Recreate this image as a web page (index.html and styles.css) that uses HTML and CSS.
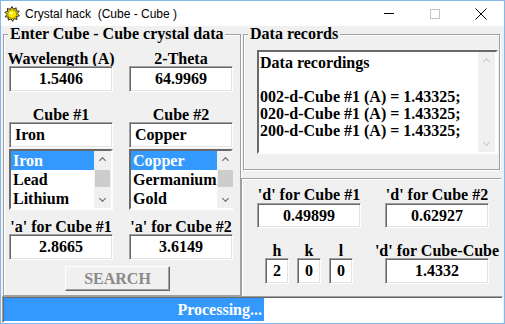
FILE: index.html
```html
<!DOCTYPE html>
<html lang="en">
<head>
<meta charset="UTF-8">
<title>Crystal hack (Cube - Cube )</title>
<link rel="stylesheet" href="styles.css">
</head>
<body>

<div class="window">
    <div class="titlebar">
        <svg class="app-icon" width="16" height="16" viewBox="0 0 16 16">
            <polygon points="8,0.5 9.4,3.2 12.2,1.8 12.1,4.8 15.2,5.2 13.3,7.6 15.5,9.8 12.5,10.6 13,13.6 10.1,12.6 8.6,15.4 7,12.8 4.2,14.2 4.3,11.2 1.2,10.8 3,8.4 0.8,6.2 3.8,5.4 3.3,2.4 6.2,3.4" fill="#ffe100" stroke="#2b2b2b" stroke-width="1"/>
            <circle cx="8.2" cy="8.1" r="4.4" fill="#f6e600" stroke="#8c7c00" stroke-width="0.8"/>
            <circle cx="7.2" cy="7" r="1.6" fill="#fffba0"/>
        </svg>
        <span class="title">Crystal hack  (Cube - Cube )</span>
        <div class="controls">
            <div class="ctl"><span class="min-line"></span></div>
            <div class="ctl"><span class="max-box"></span></div>
            <div class="ctl">
                <svg width="12" height="12" viewBox="0 0 12 12">
                    <path d="M0.5 0.5 L11.5 11.5 M11.5 0.5 L0.5 11.5" stroke="#000" stroke-width="1"/>
                </svg>
            </div>
        </div>
    </div>

    <div class="main">
        <fieldset class="group input-group">
            <legend>Enter Cube - Cube crystal data</legend>
            <div class="grid">
                <div class="col">
                    <span class="lbl">Wavelength (A)</span>
                    <input class="box" value="1.5406" readonly>
                    <span class="lbl gap-cube">Cube #1</span>
                    <input class="box combo" value="Iron" readonly>
                    <div class="listbox">
                        <div class="items">
                            <div class="item selected">Iron</div>
                            <div class="item">Lead</div>
                            <div class="item">Lithium</div>
                        </div>
                        <div class="vscroll">
                            <span class="arrow up"></span>
                            <span class="thumb"></span>
                            <span class="arrow down"></span>
                        </div>
                    </div>
                    <span class="lbl gap-a">'a' for Cube #1</span>
                    <input class="box" value="2.8665" readonly>
                </div>
                <div class="col">
                    <span class="lbl">2-Theta</span>
                    <input class="box" value="64.9969" readonly>
                    <span class="lbl gap-cube">Cube #2</span>
                    <input class="box combo" value="Copper" readonly>
                    <div class="listbox">
                        <div class="items">
                            <div class="item selected">Copper</div>
                            <div class="item">Germanium</div>
                            <div class="item">Gold</div>
                        </div>
                        <div class="vscroll">
                            <span class="arrow up"></span>
                            <span class="thumb"></span>
                            <span class="arrow down"></span>
                        </div>
                    </div>
                    <span class="lbl gap-a">'a' for Cube #2</span>
                    <input class="box" value="3.6149" readonly>
                </div>
            </div>
            <button class="search-btn" disabled>SEARCH</button>
        </fieldset>

        <div class="right">
            <fieldset class="group records">
                <legend>Data records</legend>
                <div class="memo">
                    <div class="memo-text">
                        <div>Data recordings</div>
                        <div>&nbsp;</div>
                        <div>002-d-Cube #1 (A) = 1.43325;</div>
                        <div>020-d-Cube #1 (A) = 1.43325;</div>
                        <div>200-d-Cube #1 (A) = 1.43325;</div>
                    </div>
                    <div class="vscroll disabled">
                        <span class="arrow up"></span>
                        <span class="arrow down"></span>
                    </div>
                </div>
            </fieldset>

            <div class="panel">
                <div class="prow">
                    <div class="pcol">
                        <span class="lbl">'d' for Cube #1</span>
                        <input class="box short" value="0.49899" readonly>
                    </div>
                    <div class="pcol">
                        <span class="lbl">'d' for Cube #2</span>
                        <input class="box short" value="0.62927" readonly>
                    </div>
                </div>
                <div class="prow second">
                    <div class="hkl">
                        <div class="miller"><span class="lbl">h</span><input class="box tiny" value="2" readonly></div>
                        <div class="miller"><span class="lbl">k</span><input class="box tiny" value="0" readonly></div>
                        <div class="miller"><span class="lbl">l</span><input class="box tiny" value="0" readonly></div>
                    </div>
                    <div class="pcol">
                        <span class="lbl">'d' for Cube-Cube</span>
                        <input class="box" value="1.4332" readonly>
                    </div>
                </div>
            </div>
        </div>
    </div>

    <div class="progress">
        <div class="progress-fill">Processing...</div>
    </div>
</div>

</body>
</html>
```

FILE: styles.css
```css
* {
    box-sizing: border-box;
}
body {
    margin: 0;
    background: #fff;
    font-family: "Liberation Serif", "Times New Roman", serif;
    color: #000;
}
.window {
    width: 505px;
    height: 324px;
    border: 1px solid #84b9ec;
    background: #f0f0f0;
    display: flex;
    flex-direction: column;
    overflow: hidden;
}
.titlebar {
    height: 25px;
    flex: none;
    background: #fff;
    display: flex;
    align-items: center;
    padding-left: 3px;
    font-family: "Liberation Sans", Arial, sans-serif;
    font-size: 12px;
}
.app-icon {
    flex: none;
}
.title {
    margin-left: 5px;
    white-space: pre;
}
.controls {
    margin-left: auto;
    display: flex;
    height: 100%;
}
.ctl {
    width: 46px;
    height: 100%;
    display: flex;
    align-items: center;
    justify-content: center;
}
.min-line {
    width: 10px;
    height: 1px;
    background: #000;
}
.max-box {
    width: 10px;
    height: 10px;
    border: 1px solid #c4c4c4;
}

/* main area */
.main {
    height: 270px;
    flex: none;
    display: flex;
    padding-left: 2px;
}
.group {
    margin: 0;
    padding: 0;
    min-width: 0;
    border: 1px solid #a0a0a0;
    box-shadow: inset 1px 1px 0 #fff, 1px 1px 0 #fff;
}
.group legend {
    font-size: 16px;
    font-weight: bold;
    line-height: 16px;
    padding: 0 2px;
    margin-left: 4px;
    background: #f0f0f0;
    position: relative;
    white-space: nowrap;
}
.input-group {
    width: 238px;
    height: 270px;
}
.grid {
    display: grid;
    grid-template-columns: 104px 104px;
    column-gap: 16px;
    padding: 10px 0 0 5px;
}
.col {
    display: flex;
    flex-direction: column;
    align-items: center;
}
.lbl {
    display: block;
    font-size: 16px;
    font-weight: bold;
    line-height: 14px;
    height: 14px;
    text-align: center;
    white-space: nowrap;
}
.gap-cube {
    margin-top: 16px;
}
.gap-a {
    margin-top: 10px;
}
.box {
    width: 104px;
    height: 26px;
    flex: none;
    margin: 0;
    padding: 0;
    border: 1px solid;
    border-color: #a0a0a0 #fff #fff #a0a0a0;
    box-shadow: inset 1px 1px 0 #696969, inset -1px -1px 0 #e3e3e3;
    background: #fff;
    font-family: "Liberation Serif", "Times New Roman", serif;
    font-size: 16px;
    font-weight: bold;
    color: #000;
    text-align: center;
    outline: none;
}
.combo {
    text-align: left;
    padding-left: 5px;
}
.short {
    height: 25px;
    margin-top: 1px;
}
.tiny {
    width: 24px;
}

/* list boxes */
.listbox {
    width: 104px;
    height: 61px;
    margin-top: 1px;
    display: flex;
    border: 2px solid;
    border-color: #696969 #fff #fff #696969;
    background: #fff;
}
.items {
    flex: 1;
}
.item {
    height: 19px;
    line-height: 19px;
    padding-left: 2px;
    font-size: 16px;
    font-weight: bold;
    white-space: nowrap;
}
.item.selected {
    background: #3399ff;
    color: #fff;
}
.vscroll {
    width: 17px;
    flex: none;
    background: #f0f0f0;
    display: flex;
    flex-direction: column;
    align-items: center;
    position: relative;
}
.arrow {
    width: 17px;
    height: 17px;
    position: relative;
}
.arrow::before {
    content: "";
    position: absolute;
    left: 6px;
    width: 4px;
    height: 4px;
    border-left: 1.5px solid #606060;
    border-top: 1.5px solid #606060;
}
.arrow.up::before {
    top: 7px;
    transform: rotate(45deg);
}
.arrow.down::before {
    top: 5px;
    transform: rotate(-135deg);
}
.listbox .arrow.down {
    margin-top: auto;
}
.thumb {
    width: 15px;
    height: 17px;
    margin-top: 2px;
    background: #cdcdcd;
}
.vscroll.disabled .arrow::before {
    border-color: #c8c8c8;
}
.vscroll.disabled .arrow.down {
    margin-top: auto;
}

.search-btn {
    display: block;
    width: 105px;
    height: 25px;
    margin: 6px 0 0 61px;
    padding: 0;
    border: 1px solid;
    border-color: #fff #696969 #696969 #fff;
    box-shadow: inset -1px -1px 0 #a0a0a0;
    background: #f0f0f0;
    font-family: "Liberation Serif", "Times New Roman", serif;
    font-size: 16px;
    font-weight: bold;
    color: #8a8a8a;
}

/* right side */
.right {
    width: 262px;
    display: flex;
    flex-direction: column;
}
.records {
    height: 144px;
    margin: 0 3px 0 2px;
}
.memo {
    width: 241px;
    height: 104px;
    margin: 8px 0 0 13px;
    display: flex;
    border: 2px solid;
    border-color: #696969 #fff #fff #696969;
    background: #fff;
}
.memo-text {
    flex: 1;
    padding: 2px 0 0 1px;
    font-size: 16px;
    font-weight: bold;
    line-height: 17px;
    white-space: nowrap;
}
.memo .vscroll {
    margin-right: 1px;
}

.panel {
    height: 118px;
    margin: 8px 2px 0 0;
    border-top: 1px solid #a0a0a0;
    border-left: 1px solid #a0a0a0;
    box-shadow: inset 1px 1px 0 #fff;
    padding: 9px 0 0 15px;
}
.prow {
    display: flex;
    align-items: flex-end;
    gap: 24px;
}
.prow.second {
    margin-top: 16px;
}
.pcol {
    width: 104px;
    display: flex;
    flex-direction: column;
    align-items: center;
}
.hkl {
    width: 104px;
    display: flex;
    gap: 8px;
    padding-left: 8px;
}
.miller {
    display: flex;
    flex-direction: column;
    align-items: center;
}

/* progress bar */
.progress {
    height: 27px;
    flex: none;
    margin: 0 1px;
    border: 1px solid;
    border-color: #a0a0a0 #fff #fff #a0a0a0;
    box-shadow: inset 1px 1px 0 #696969;
    background: #fff;
    padding: 1px 0 0 1px;
}
.progress-fill {
    width: 260px;
    height: 23px;
    background: #3399ff;
    color: #fff;
    font-size: 16px;
    font-weight: bold;
    line-height: 23px;
    text-align: right;
    padding-right: 2px;
    white-space: nowrap;
}
```
